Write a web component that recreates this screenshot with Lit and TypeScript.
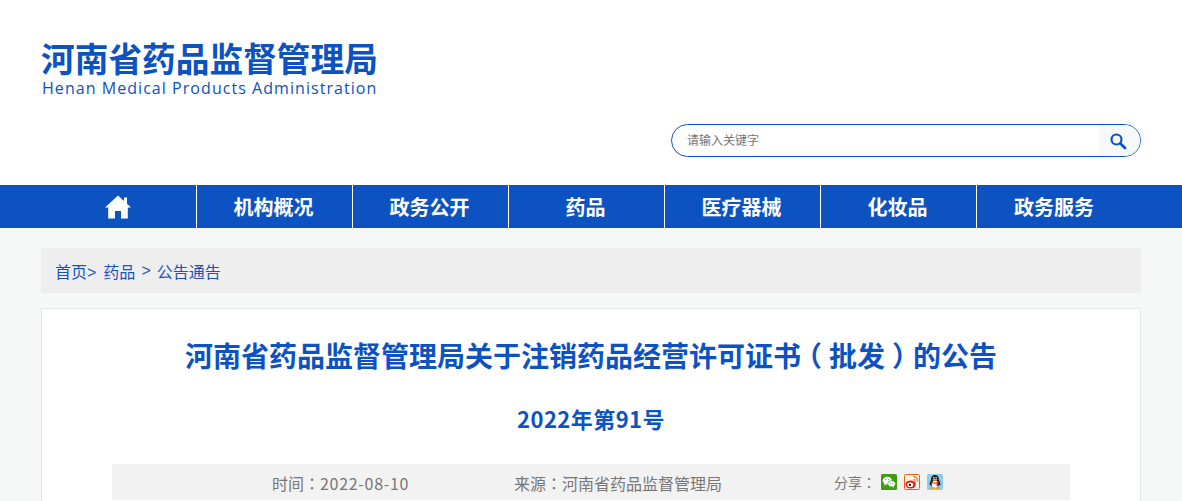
import { LitElement, html, css } from "lit";
import { customElement } from "lit/decorators.js";

const NAV = ["机构概况", "政务公开", "药品", "医疗器械", "化妆品", "政务服务"];

@customElement("app-root")
export class AppRoot extends LitElement {
  static styles = css`
    :host { display: block; width: 1182px; height: 501px; overflow: hidden; background: #f6f8f8;
      font-family: "Liberation Sans", "Noto Sans CJK SC", sans-serif; }
    .top { background: #fff; height: 185px; box-sizing: border-box; padding: 39px 41px 0; display: flex; flex-direction: column; }
    .logo-cn { font-family: "Noto Sans CJK SC", sans-serif; font-weight: 700; font-size: 33.7px; line-height: 38px; color: #0c52c1; white-space: nowrap; }
    .logo-en { font-family: "Open Sans", sans-serif; font-size: 16px; line-height: 18px; margin-top: 2px; color: #0c52c1; letter-spacing: 1.05px; white-space: nowrap; padding-left: 1px; }
    .search { align-self: flex-end; margin-top: 27px; width: 470px; height: 33px; box-sizing: border-box; border: 1px solid #0c52c1; border-radius: 17px; display: flex; overflow: hidden; }
    .ph { flex: 1; font-family: "Noto Sans CJK SC", sans-serif; font-size: 12px; line-height: 29px; color: #757575; padding-left: 15px; }
    .btn { width: 41px; background: #f7f8f8; display: flex; align-items: center; justify-content: center; padding-right: 3px; box-sizing: border-box; }
    nav { background: #0c52c1; height: 43px; padding-left: 41px; display: flex; }
    .item { width: 156px; height: 43px; box-sizing: border-box; border-right: 1px solid #fff; padding-right: 2px; display: flex; align-items: center; justify-content: center; color: #fff; font-family: "Noto Sans CJK SC", sans-serif; font-weight: 700; font-size: 20px; }
    .item:last-child { border-right: 0; }
    .item svg { display: block; }
    main { padding: 20px 41px 0; display: flex; flex-direction: column; }
    .crumb { height: 45px; background: #eee; padding-left: 14px; display: flex; align-items: center; font-family: "Noto Sans CJK SC", sans-serif; font-size: 16px; color: #1a52c4; white-space: nowrap; margin-bottom: 15px; }
    .crumb .gt { font-family: "Liberation Sans", sans-serif; }
    .m7 { margin-left: 7px; }
    .m6 { margin-left: 6px; }
    .card { background: #fff; border: 1px solid #e5e8e8; border-bottom: 0; height: 240px; box-sizing: border-box; padding: 25px 70px 0; display: flex; flex-direction: column; }
    h1 { margin: 0; text-align: center; font-family: "Noto Sans CJK SC", sans-serif; font-weight: 700; font-size: 28px; line-height: 42px; color: #0c52c1; white-space: nowrap; }
    .paren { font-feature-settings: "halt"; padding: 0 0.25em; }
    h2 { margin: 26px 0 0; text-align: center; font-family: "Noto Sans CJK SC", sans-serif; font-weight: 700; font-size: 22px; line-height: 32px; color: #0c52c1; letter-spacing: 0.45px; }
    .info { margin-top: 30px; height: 36px; background: #f2f2f2; display: flex; align-items: center; font-family: "Noto Sans CJK SC", sans-serif; font-size: 16px; color: #777; white-space: nowrap; }
    .info > span { padding-top: 2px; }
    .colon { font-family: "Noto Sans CJK TC", sans-serif; }
    .date { letter-spacing: 0.7px; }
    .time { margin-left: 160px; width: 242px; }
    .src { width: 320px; }
    .info > .share { font-size: 14px; width: 47px; padding-top: 0; }
    .ic { display: block; width: 16px; height: 16px; margin-right: 7px; }
  `;

  render() {
    return html`
      <div class="top">
        <div class="logo-cn">河南省药品监督管理局</div>
        <div class="logo-en">Henan Medical Products Administration</div>
        <div class="search">
          <div class="ph">请输入关键字</div>
          <div class="btn">
            <svg width="18" height="18" viewBox="0 0 18 18" fill="none" stroke="#0c52c1">
              <circle cx="7.5" cy="7.5" r="5" stroke-width="2.2" />
              <path d="M11.2 11.2 L16 16" stroke-width="2.8" stroke-linecap="round" />
            </svg>
          </div>
        </div>
      </div>
      <nav>
        <div class="item">
          <svg width="26" height="24" viewBox="0 0 26 24" fill="#fff">
            <path d="M13 0.5 L19 6 L19 2.5 L22 2.5 L22 8.8 L26 12.6 L22.8 12.6 L22.8 23.5 L16 23.5 L16 16 L10 16 L10 23.5 L3.2 23.5 L3.2 12.6 L0 12.6 Z" />
          </svg>
        </div>
        ${NAV.map((n) => html`<div class="item">${n}</div>`)}
      </nav>
      <main>
        <div class="crumb">
          <span>首页<span class="gt">&gt;</span></span>
          <span class="m7">药品</span>
          <span class="gt m6">&gt;</span>
          <span class="m6">公告通告</span>
        </div>
        <div class="card">
          <h1>河南省药品监督管理局关于注销药品经营许可证书<span class="paren">（</span>批发<span class="paren">）</span>的公告</h1>
          <h2>2022年第91号</h2>
          <div class="info">
            <span class="time">时间<span class="colon">：</span><span class="date">2022-08-10</span></span>
            <span class="src">来源<span class="colon">：</span>河南省药品监督管理局</span>
            <span class="share">分享<span class="colon">：</span></span>
            <svg class="ic" viewBox="0 0 16 16">
              <rect width="16" height="16" rx="1.5" fill="#3f9c12" />
              <ellipse cx="6.3" cy="6.6" rx="4.6" ry="3.8" fill="#fff" />
              <path d="M3.6 9.5 L3 11.6 L5.6 10.2 Z" fill="#fff" />
              <ellipse cx="10.6" cy="9.8" rx="3.8" ry="3.1" fill="#fff" stroke="#3f9c12" stroke-width=".6" />
              <path d="M12.4 12.2 L13 13.8 L11 12.8 Z" fill="#fff" />
              <circle cx="4.8" cy="5.6" r=".6" fill="#3f9c12" />
              <circle cx="7.8" cy="5.6" r=".6" fill="#3f9c12" />
              <circle cx="9.4" cy="9.2" r=".5" fill="#3f9c12" />
              <circle cx="11.8" cy="9.2" r=".5" fill="#3f9c12" />
            </svg>
            <svg class="ic" viewBox="0 0 16 16">
              <rect x=".5" y=".5" width="15" height="15" rx="1" fill="#fff1e0" stroke="#e8601a" />
              <ellipse cx="6.6" cy="10.4" rx="5.2" ry="4" fill="#e0201b" />
              <ellipse cx="6.2" cy="10.8" rx="3" ry="2.3" fill="#fff" />
              <circle cx="5.9" cy="10.9" r="1.2" fill="#222" />
              <path d="M9 2.6 A4.4 4.4 0 0 1 13.6 7.6" fill="none" stroke="#f08a1d" stroke-width="1.5" />
              <path d="M9.4 5.3 A2 2 0 0 1 11.4 7.5" fill="none" stroke="#f08a1d" stroke-width="1.3" />
            </svg>
            <svg class="ic" viewBox="0 0 16 16">
              <rect width="16" height="16" rx="1.5" fill="#8ccbf2" />
              <path d="M8 1 C11 1 12 3.5 12 6 C12.8 7.5 13.8 9.5 13.2 11.5 L11.8 11 L11.4 12.6 L4.6 12.6 L4.2 11 L2.8 11.5 C2.2 9.5 3.2 7.5 4 6 C4 3.5 5 1 8 1 Z" fill="#1a1a1a" />
              <ellipse cx="8" cy="10.2" rx="3.2" ry="3.4" fill="#fff" />
              <ellipse cx="8" cy="5.8" rx="2.6" ry="1" fill="#f4a31a" />
              <path d="M4 7.6 Q8 9.8 12 7.6 L12 9 L11 9 L11 12 L9.6 12 L9.6 9.6 Q8 10 4 8.8 Z" fill="#d9261c" />
              <ellipse cx="5.2" cy="14.2" rx="2.4" ry="1.1" fill="#f4a31a" />
              <ellipse cx="10.8" cy="14.2" rx="2.4" ry="1.1" fill="#f4a31a" />
              <circle cx="6.8" cy="3.8" r=".8" fill="#fff" />
              <circle cx="9.2" cy="3.8" r=".8" fill="#fff" />
            </svg>
          </div>
        </div>
      </main>
    `;
  }
}
